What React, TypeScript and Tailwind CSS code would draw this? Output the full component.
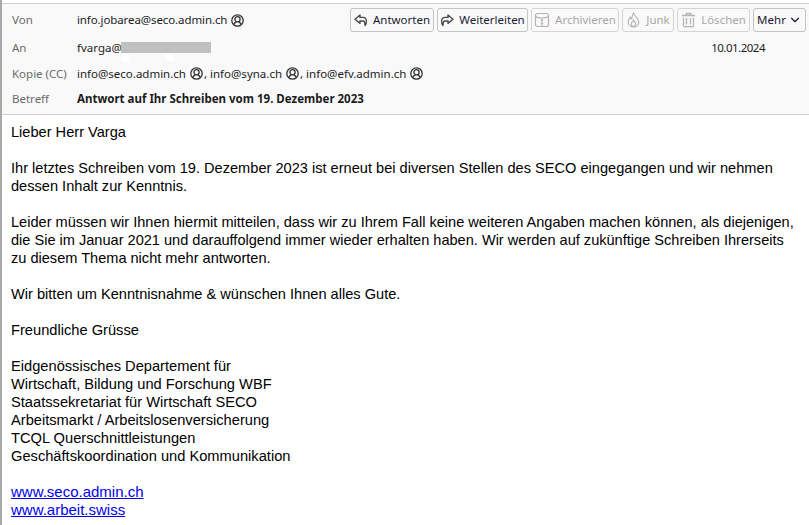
import type { ReactNode } from "react";
import { ChevronDown } from "lucide-react";

// toolbar glyphs, drawn by hand to follow the mail client's own icon set
function ReplyIcon() {
  return (
    <svg width="14" height="13" viewBox="0 0 14 13" fill="none" stroke="#4a4a4a" strokeWidth="1.4" strokeLinejoin="round">
      <path d="M6 1 L1 5.2 L6 9.4 V7 H9 C10.4 7 11 8.4 11 11.6 C12.8 10 13.4 3.4 9 3.4 H6 Z" />
    </svg>
  );
}

function ForwardIcon() {
  return (
    <svg width="14" height="13" viewBox="0 0 14 13" fill="none" stroke="#4a4a4a" strokeWidth="1.4" strokeLinejoin="round">
      <path d="M8 1 L13 5.2 L8 9.4 V7 H5 C3.6 7 3 8.4 3 11.6 C1.2 10 0.6 3.4 5 3.4 H8 Z" />
    </svg>
  );
}

function ArchiveIcon() {
  return (
    <svg width="16" height="16" viewBox="0 0 16 16" fill="none" stroke="#b4b4b4" strokeWidth="1.2">
      <rect x="1.5" y="1.5" width="13" height="13" rx="2" />
      <path d="M1.5 4.5 C4 6.5 12 6.5 14.5 4.5" />
      <path d="M8 6 V7.5 M6.8 8.3 H9.2 M8 9 V10.5 M6.8 11.3 H9.2 M8 12 V14" />
    </svg>
  );
}

function JunkIcon() {
  return (
    <svg width="15" height="16" viewBox="0 0 15 16" fill="none" stroke="#b4b4b4" strokeWidth="1.2" strokeLinejoin="round">
      <path d="M7.5 1 C8 4 12.8 6 12.8 10.2 C12.8 13 10.4 15 7.5 15 C4.6 15 2.2 13 2.2 10.2 C2.2 7.8 3.6 6.4 4.4 5 C4.8 6 5.2 6.6 5.8 6.9 C6 4.8 6.4 2.6 7.5 1 Z" />
      <path d="M7.6 8 C8.4 9.6 9.8 10.6 9.8 12.2 C9.8 13.6 8.8 14.6 7.5 14.6 C6.2 14.6 5.2 13.6 5.2 12.2 C5.2 10.6 6.8 9.6 7.6 8 Z" />
    </svg>
  );
}

function TrashIcon() {
  return (
    <svg width="15" height="16" viewBox="0 0 15 16" fill="none" stroke="#b4b4b4" strokeWidth="1.3">
      <path d="M1 3.5 H14 M5.2 3.5 V1.5 H9.8 V3.5" />
      <path d="M2.5 5.5 V13.4 C2.5 14.2 3 14.7 3.8 14.7 H11.2 C12 14.7 12.5 14.2 12.5 13.4 V5.5" />
      <path d="M5.5 6 V12.6 M9.5 6 V12.6" />
    </svg>
  );
}

function ContactIcon() {
  return (
    <svg width="13" height="13" viewBox="0 0 13 13" fill="none" stroke="#333" strokeWidth="1.3">
      <circle cx="6.5" cy="6.5" r="5.7" />
      <circle cx="6.5" cy="5.2" r="2.6" />
      <path d="M2.6 10.6 C3.4 8.8 4.6 8.2 5.4 7.8 M10.4 10.6 C9.6 8.8 8.4 8.2 7.6 7.8" />
    </svg>
  );
}

function Contact({ children, comma }: { children: string; comma?: boolean }) {
  return (
    <span className="inline-flex items-center gap-[4px]">
      {children}
      <span className="-mr-[1px] flex items-center">
        <ContactIcon />
        {comma && <span className="ml-[1px]">,</span>}
      </span>
    </span>
  );
}

function ToolButton({ icon, label, width, disabled }: { icon?: ReactNode; label: ReactNode; width: string; disabled?: boolean }) {
  return (
    <button
      className={`flex h-6 items-center justify-center gap-[5px] rounded-[3px] border ${width} ${
        disabled ? "border-[#d4d4d4] text-[#a8a8a8]" : "border-[#c4c4c4] text-[#1b1b30]"
      }`}
    >
      {icon}
      {label}
    </button>
  );
}

function Row({ label, height, children }: { label: string; height: string; children: ReactNode }) {
  return (
    <div className={`flex items-center ${height}`}>
      <div className="w-[75px] shrink-0 pl-[10px] text-[#6b6b6b]">{label}</div>
      <div className="flex min-w-0 flex-1 items-center">{children}</div>
    </div>
  );
}

export default function App() {
  return (
    <div className="h-[525px] w-[809px] overflow-hidden border-l-2 border-[#a9a9a9] bg-white">
      <div className="mt-[3px] h-[112px] border-y border-[#d0d0d0] bg-[#f9f9fa] font-['Noto_Sans',sans-serif] text-[11.5px] text-[#1c1c1c]">
        <Row label="Von" height="h-[32px]">
          <div className="flex flex-1 items-center justify-between pr-[3px]">
            <span className="tracking-[-0.1px]">
              <Contact>info.jobarea@seco.admin.ch</Contact>
            </span>
            <div className="flex gap-[3px]">
              <ToolButton width="w-[84px]" label="Antworten" icon={<ReplyIcon />} />
              <ToolButton width="w-[91px]" label="Weiterleiten" icon={<ForwardIcon />} />
              <ToolButton width="w-[88px]" disabled label="Archivieren" icon={<ArchiveIcon />} />
              <ToolButton width="w-[52px]" disabled label="Junk" icon={<JunkIcon />} />
              <ToolButton width="w-[73px]" disabled label="Löschen" icon={<TrashIcon />} />
              <ToolButton
                width="w-[53px]"
                label={
                  <span className="flex items-center gap-[2px]">
                    Mehr
                    <ChevronDown size={14} />
                  </span>
                }
              />
            </div>
          </div>
        </Row>
        <Row label="An" height="h-[23px]">
          <div className="flex flex-1 items-center justify-between pr-[44px]">
            <div className="relative flex items-center">
              <span className="-mr-[1px]">fvarga@</span>
              <span className="h-[11px] w-[90px] bg-[#c0c0c0]" />
              <span className="absolute top-[15px] left-[44px] h-[7px] w-[8px] bg-white" />
              <span className="absolute top-[15px] left-[89px] h-[7px] w-[8px] bg-white" />
            </div>
            <span className="tracking-[-0.5px]">10.01.2024</span>
          </div>
        </Row>
        <Row label="Kopie (CC)" height="h-[29px]">
          <div className="flex items-center gap-[4px]">
            <Contact comma>info@seco.admin.ch</Contact>
            <Contact comma>info@syna.ch</Contact>
            <Contact>info@efv.admin.ch</Contact>
          </div>
        </Row>
        <Row label="Betreff" height="h-[21px]">
          <span className="font-bold">Antwort auf Ihr Schreiben vom 19. Dezember 2023</span>
        </Row>
      </div>
      <div className="px-[9px] pt-[8px] font-['Liberation_Sans',sans-serif] text-[14.67px] leading-[18px] text-black">
        <p className="text-[14.6px]">Lieber Herr Varga</p>
        <p className="mt-[18px] text-[14.6px]">
          Ihr letztes Schreiben vom 19. Dezember 2023 ist erneut bei diversen Stellen des SECO eingegangen und wir nehmen
          <br />
          dessen Inhalt zur Kenntnis.
        </p>
        <p className="mt-[18px] text-[14.57px]">
          Leider müssen wir Ihnen hiermit mitteilen, dass wir zu Ihrem Fall keine weiteren Angaben machen können, als diejenigen,
          <br />
          die Sie im Januar 2021 und darauffolgend immer wieder erhalten haben. Wir werden auf zukünftige Schreiben Ihrerseits
          <br />
          zu diesem Thema nicht mehr antworten.
        </p>
        <p className="mt-[18px] text-[14.6px]">Wir bitten um Kenntnisnahme &amp; wünschen Ihnen alles Gute.</p>
        <p className="mt-[18px]">Freundliche Grüsse</p>
        <p className="mt-[18px]">
          Eidgenössisches Departement für
          <br />
          Wirtschaft, Bildung und Forschung WBF
          <br />
          Staatssekretariat für Wirtschaft SECO
          <br />
          Arbeitsmarkt / Arbeitslosenversicherung
          <br />
          TCQL Querschnittleistungen
          <br />
          Geschäftskoordination und Kommunikation
        </p>
        <p className="mt-[18px] text-[15px]">
          <a className="text-[#0000ee] underline">www.seco.admin.ch</a>
          <br />
          <a className="text-[#0000ee] underline">www.arbeit.swiss</a>
        </p>
      </div>
    </div>
  );
}
